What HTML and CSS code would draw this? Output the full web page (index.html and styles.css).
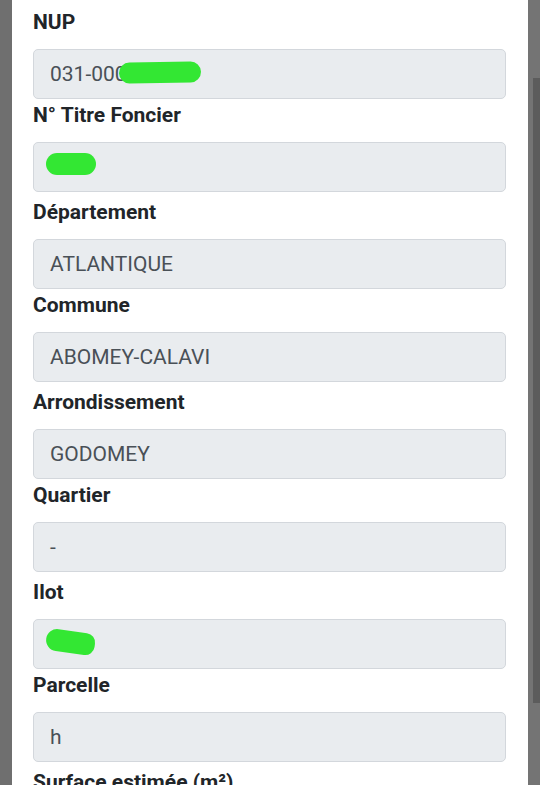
FILE: index.html
```html
<!DOCTYPE html>
<html lang="fr">
<head>
<meta charset="utf-8">
<title>Parcelle</title>
<link rel="stylesheet" href="styles.css">
</head>
<body>
<div class="screen">
  <div class="gutter-left"></div>
  <main class="card">
    <div class="field">
      <label class="label">NUP</label>
      <div class="input">031-000<span class="blob blob-nup"></span></div>
    </div>
    <div class="field">
      <label class="label">N° Titre Foncier</label>
      <div class="input"><span class="blob blob-tf"></span></div>
    </div>
    <div class="field">
      <label class="label">Département</label>
      <div class="input">ATLANTIQUE</div>
    </div>
    <div class="field">
      <label class="label">Commune</label>
      <div class="input">ABOMEY-CALAVI</div>
    </div>
    <div class="field">
      <label class="label">Arrondissement</label>
      <div class="input">GODOMEY</div>
    </div>
    <div class="field">
      <label class="label">Quartier</label>
      <div class="input">-</div>
    </div>
    <div class="field">
      <label class="label">Ilot</label>
      <div class="input"><span class="blob blob-ilot"></span></div>
    </div>
    <div class="field">
      <label class="label">Parcelle</label>
      <div class="input">h</div>
    </div>
    <div class="field">
      <label class="label">Surface estimée (m²)</label>
      <div class="input"></div>
    </div>
  </main>
  <div class="gutter-right">
    <div class="thumb"></div>
  </div>
</div>
</body>
</html>
```
FILE: styles.css
```css
html, body {
  margin: 0;
  padding: 0;
  height: 100%;
  overflow: hidden;
  background: #6f6f6f;
}
.screen {
  display: flex;
  height: 785px;
  font-family: Roboto, "Liberation Sans", Arial, sans-serif;
}
.gutter-left {
  width: 12px;
  flex: none;
  background: #6f6f6f;
}
.card {
  flex: 1;
  background: #ffffff;
  padding: 9px 22px 0 21px;
  overflow: hidden;
}
.gutter-right {
  width: 12px;
  flex: none;
  background: #747474;
  display: flex;
}
.thumb {
  margin: 78px 0 0 5px;
  width: 7px;
  height: 625px;
  background: #5c5c5c;
}
.field {
  display: flex;
  flex-direction: column;
  margin-bottom: 3px;
}
.field:nth-child(even) {
  margin-bottom: 7px;
}
.label {
  font-size: 21px;
  font-weight: 700;
  line-height: 27px;
  color: #212529;
  margin-bottom: 13px;
}
.input {
  position: relative;
  box-sizing: border-box;
  height: 50px;
  background: #e9ecef;
  border: 1px solid #d3d7dc;
  border-radius: 5px;
  padding: 0 16px;
  display: flex;
  align-items: center;
  font-size: 21px;
  color: #495057;
}
.blob {
  position: absolute;
  background: #33e733;
  border-radius: 12px;
}
.blob-nup {
  left: 85px;
  top: 12px;
  width: 82px;
  height: 21px;
  transform: rotate(-1deg);
}
.blob-tf {
  left: 12px;
  top: 10px;
  width: 50px;
  height: 22px;
}
.blob-ilot {
  left: 12px;
  top: 11px;
  width: 49px;
  height: 22px;
  transform: rotate(8deg);
  border-radius: 14px 12px 12px 14px;
}
```
